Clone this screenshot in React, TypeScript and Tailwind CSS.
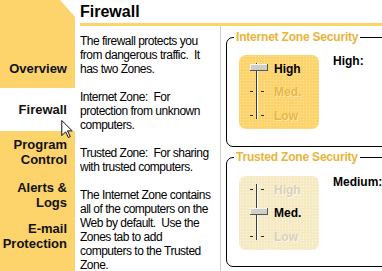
import React from 'react';

// Left column copy, one entry per rendered line
const PARAGRAPHS: string[][] = [
  ['The firewall protects you', 'from dangerous traffic.  It', 'has two Zones.'],
  ['Internet Zone:  For', 'protection from unknown', 'computers.'],
  ['Trusted Zone:  For sharing', 'with trusted computers.'],
  [
    'The Internet Zone contains',
    'all of the computers on the',
    'Web by default.  Use the',
    'Zones tab to add',
    'computers to the Trusted',
    'Zone.',
  ],
];

type Level = 0 | 1 | 2; // 0 = High, 1 = Med., 2 = Low

const TICK_Y = [7, 30, 54];

// Vertical slider graphic: track, ticks and the thumb
const SliderTrack: React.FC<{ level: Level }> = ({ level }) => {
  const c = TICK_Y[level] - 1;
  return (
    <svg width="22" height="62" viewBox="0 0 22 62" className="shrink-0">
      <rect x="8" y="2" width="1" height="56" fill="#3a3a3a" />
      <rect x="9" y="2" width="1" height="56" fill="#ffffff" />
      {TICK_Y.map((y) => (
        <g key={y}>
          <rect x="2" y={y} width="3" height="1" fill="#2a2a2a" />
          <rect x="13" y={y} width="3" height="1" fill="#2a2a2a" />
        </g>
      ))}
      <rect x="2" y={c - 3} width="17" height="6" fill="#cfcfc8" />
      <rect x="2" y={c - 3} width="17" height="1" fill="#f4f4f0" />
      <rect x="2" y={c - 3} width="1" height="6" fill="#f4f4f0" />
      <rect x="2" y={c + 3} width="17" height="1" fill="#555555" />
      <rect x="19" y={c - 3} width="1" height="7" fill="#555555" />
    </svg>
  );
};

const SliderPanel: React.FC<{ level: Level; warm: boolean }> = ({ level, warm }) => {
  const labels = ['High', 'Med.', 'Low'];
  const dim = warm
    ? 'text-[#e9b646] [text-shadow:1px_1px_0_#fde8b0]'
    : 'text-[#d8d0bc] [text-shadow:1px_1px_0_#fdf8e8]';
  return (
    <div
      className={
        warm
          ? 'w-[80px] h-[74px] shrink-0 rounded-[7px] bg-[#fdd36c] bg-[radial-gradient(#fde4a4_0.7px,transparent_0.9px)] bg-[length:3px_3px] flex pl-[9px] pt-[6px]'
          : 'w-[80px] h-[74px] shrink-0 rounded-[7px] bg-[#f6eac4] bg-[radial-gradient(#fdf7e4_0.7px,transparent_0.9px)] bg-[length:3px_3px] flex pl-[9px] pt-[6px]'
      }
    >
      <SliderTrack level={level} />
      <div className="ml-[4px] pt-[1px] flex flex-col text-[12px] leading-[14px] font-bold">
        {labels.map((l, i) => (
          <span
            key={l}
            className={`${i === 1 ? 'mt-[9px]' : i === 2 ? 'mt-[10px]' : ''} ${i === level ? 'text-black' : dim}`}
          >
            {l}
          </span>
        ))}
      </div>
    </div>
  );
};

const ZoneBox: React.FC<{ title: string; level: Level; warm: boolean; caption: string; gap: string }> = ({
  title,
  level,
  warm,
  caption,
  gap,
}) => (
  <fieldset className="h-[117px] w-[180px] min-w-0 border border-black rounded-l-[7px] pl-[12px]">
    <legend className="ml-[-5px] px-[2px] text-[12px] leading-[14px] font-bold text-[#e8b43a] tracking-[-0.2px]">
      {title}
    </legend>
    <div className={`${gap} flex items-start`}>
      <SliderPanel level={level} warm={warm} />
      <span className="ml-[14px] mt-[-1px] text-[12px] leading-[14px] font-bold">{caption}</span>
    </div>
  </fieldset>
);

const App: React.FC = () => {
  return (
    <div className="relative w-[382px] h-[271px] overflow-hidden bg-white flex text-black font-['Liberation_Sans',Arial,sans-serif]">
      {/* Nav column */}
      <div className="w-[75px] shrink-0 flex flex-col text-[13px] leading-[15px] font-bold text-[#111]">
        <div className="h-[88px] bg-[#fdd36c] [clip-path:polygon(0_0,60px_0,75px_17px,75px_100%,0_100%)] flex items-end justify-end pr-[8px] pb-[12px]">
          Overview
        </div>
        <div className="h-[43px] bg-white flex items-center justify-end pr-[8px]">Firewall</div>
        <div className="flex-1 bg-[#fdd36c] pt-[6px] pr-[8px] flex flex-col items-end text-right">
          <div>
            Program
            <br />
            Control
          </div>
          <div className="mt-[13px]">
            Alerts &amp;
            <br />
            Logs
          </div>
          <div className="mt-[11px]">
            E-mail
            <br />
            Protection
          </div>
        </div>
      </div>

      {/* Main area */}
      <div className="flex-1 min-w-0 flex flex-col">
        <div className="ml-[5px] h-[26px] shrink-0 border-b-[3px] border-[#fdd36c] pt-[2px] text-[16px] leading-[20px] font-bold">
          Firewall
        </div>
        <div className="flex flex-1 min-h-0">
          <div className="w-[145px] shrink-0 pl-[5px] pt-[8px] text-[12px] leading-[14px] tracking-[-0.5px] whitespace-pre">
            {PARAGRAPHS.map((p, i) => (
              <p key={i} className="mb-[14px]">
                {p.join('\n')}
              </p>
            ))}
          </div>
          <div className="flex-1 min-w-0 overflow-hidden border-l border-[#cfcfcf] pl-[5px] pt-[4px] flex flex-col">
            <ZoneBox title="Internet Zone Security" level={0} warm caption="High:" gap="mt-[11px]" />
            <div className="mt-[3px]">
              <ZoneBox title="Trusted Zone Security" level={1} warm={false} caption="Medium:" gap="mt-[12px]" />
            </div>
          </div>
        </div>
      </div>

      {/* Mouse pointer over the Firewall tab */}
      <svg className="absolute left-[61px] top-[120px]" width="12" height="18" viewBox="0 0 12 19">
        <path d="M0.5 0.5 L0.5 16.5 L4.5 12.5 L7.5 18.5 L9.5 17.5 L6.5 11.5 L11.5 11.5 Z" fill="#fff" stroke="#000" strokeWidth="1" />
      </svg>
    </div>
  );
};

export default App;
